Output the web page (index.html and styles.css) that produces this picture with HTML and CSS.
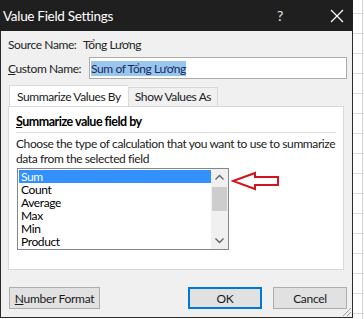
FILE: index.html
```html
<!DOCTYPE html>
<html lang="vi">
<head>
    <meta charset="UTF-8">
    <title>Value Field Settings</title>
    <link rel="stylesheet" href="styles.css">
</head>
<body>
<div class="screen">
    <div class="dialog">
        <div class="titlebar">
            <span class="title">Value Field Settings</span>
            <span class="help">?</span>
            <span class="close">
                <svg width="14" height="14" viewBox="0 0 14 14"><path d="M1 1 L13 13 M13 1 L1 13" stroke="#fff" stroke-width="1.2"/></svg>
            </span>
        </div>

        <div class="content">
            <div class="row">
                <span class="label">Source Name:</span>
                <span>Tổng Lương</span>
            </div>
            <div class="row">
                <span class="label"><u>C</u>ustom Name:</span>
                <div class="text-input"><span class="sel">Sum of Tổng Lương</span></div>
            </div>

            <div class="tabs">
                <div class="tab active">Summarize Values By</div>
                <div class="tab">Show Values As</div>
            </div>
            <div class="panel">
                <div class="heading"><u>S</u>ummarize value field by</div>
                <p class="hint">Choose the type of calculation that you want to use to summarize<br>data from the selected field</p>
                <div class="listbox">
                    <ul class="items">
                        <li class="selected">Sum</li>
                        <li>Count</li>
                        <li>Average</li>
                        <li>Max</li>
                        <li>Min</li>
                        <li>Product</li>
                    </ul>
                    <div class="scrollbar">
                        <svg class="arrow" width="17" height="17" viewBox="0 0 17 17"><path d="M4.5 10.5 L8.5 6.5 L12.5 10.5" fill="none" stroke="#606060" stroke-width="1.3"/></svg>
                        <div class="track"><div class="thumb"></div></div>
                        <svg class="arrow" width="17" height="17" viewBox="0 0 17 17"><path d="M4.5 6.5 L8.5 10.5 L12.5 6.5" fill="none" stroke="#606060" stroke-width="1.3"/></svg>
                    </div>
                </div>
                <!-- red annotation arrow -->
                <svg class="pointer" width="50" height="20" viewBox="0 0 50 20">
                    <path d="M2 10 L24 2 L24 6 L47 6 L47 14 L24 14 L24 18 Z" fill="none" stroke="#d4141c" stroke-width="2"/>
                </svg>
            </div>

            <div class="buttons">
                <button class="btn wide"><u>N</u>umber Format</button>
                <span class="spacer"></span>
                <button class="btn default">OK</button>
                <button class="btn">Cancel</button>
            </div>
        </div>
        <svg class="grip" width="12" height="12" viewBox="0 0 12 12">
            <path d="M11 3 L3 11 M11 7 L7 11" stroke="#a0a0a0" stroke-width="1"/>
        </svg>
    </div>
    <div class="sheet"></div>
</div>
</body>
</html>
```

FILE: styles.css
```css
body {
    margin: 0;
    font-family: Lato, "Liberation Sans", sans-serif;
    font-size: 12px;
    letter-spacing: -0.4px;
    color: #000;
    background: #fff;
}

.screen {
    display: flex;
    width: 364px;
    height: 319px;
    overflow: hidden;
}

.dialog {
    position: relative;
    width: 351px;
    height: 317px;
    background: #f0f0f0;
    border: 1px solid #2b2b2b;
    border-top: none;
    flex-shrink: 0;
}

.titlebar {
    display: flex;
    align-items: center;
    height: 31px;
    margin: 0 -1px;
    padding: 0 0 0 3px;
    background: #1f1f1f;
    color: #fff;
}
.title {
    font-size: 13.5px;
    letter-spacing: -0.3px;
    flex: 1;
}
.help {
    font-size: 14px;
    width: 20px;
    margin-right: 33px;
    color: #e8e8e8;
}
.close {
    display: flex;
    width: 14px;
    margin-right: 9px;
}

.content {
    padding: 5px 5px 0 7px;
}

.row {
    display: flex;
    align-items: center;
    min-height: 16px;
    margin-bottom: 5px;
    color: #222;
    white-space: nowrap;
}
.label {
    width: 75px;
    flex-shrink: 0;
}
.text-input {
    width: 255px;
    height: 20px;
    margin-left: 6px;
    border: 1px solid #ababab;
    background: #fff;
    display: flex;
    align-items: center;
    padding-left: 1px;
}
.sel {
    background: #99c6ee;
    color: #1a2a5c;
    line-height: 15px;
}

.tabs {
    display: flex;
    align-items: flex-end;
    margin: 3px 0 0 1px;
    height: 22px;
    white-space: nowrap;
}
.tab {
    height: 19px;
    line-height: 18px;
    padding: 0 6px;
    border: 1px solid #d9d9d9;
    border-bottom: none;
    background: #f0f0f0;
    box-sizing: border-box;
    color: #1a1a1a;
}
.tab.active {
    height: 22px;
    line-height: 21px;
    padding: 0 7px;
    background: #fff;
    position: relative;
    top: 1px;
    border-right: none;
}

.panel {
    position: relative;
    box-sizing: border-box;
    width: 336px;
    height: 164px;
    border: 1px solid #d9d9d9;
    background: #fff;
    padding: 7px 7px 0 7px;
}
.heading {
    font-weight: bold;
    font-size: 12.5px;
    letter-spacing: -0.5px;
    line-height: 16px;
    padding-bottom: 2px;
    border-bottom: 1px solid #dcdcdc;
}
.hint {
    margin: 3px 0 2px 0;
    line-height: 15px;
    color: #222;
    white-space: nowrap;
}

.listbox {
    display: flex;
    width: 210px;
    height: 80px;
    margin-left: 1px;
    border: 1px solid #828790;
    background: #fff;
    overflow: hidden;
}
.items {
    list-style: none;
    margin: 0;
    padding: 1px 0 0 1px;
    flex: 1;
}
.items li {
    height: 13px;
    line-height: 13px;
    padding-left: 2px;
}
.items li.selected {
    background: #3390ff;
    color: #fff;
}

.scrollbar {
    display: flex;
    flex-direction: column;
    width: 17px;
    background: #f0f0f0;
}
.track {
    flex: 1;
    padding: 1px 1px 0 1px;
}
.thumb {
    height: 24px;
    background: #cdcdcd;
}

.pointer {
    position: absolute;
    left: 222px;
    top: 64px;
}

.buttons {
    display: flex;
    gap: 11px;
    margin: 17px 0 0 1px;
    width: 338px;
}
.spacer {
    flex: 1;
}
.btn {
    box-sizing: border-box;
    height: 22px;
    width: 74px;
    padding: 0;
    font-family: inherit;
    font-size: 12px;
    letter-spacing: -0.3px;
    color: #1a1a1a;
    background: #e1e1e1;
    border: 1px solid #adadad;
    white-space: nowrap;
}
.btn.wide {
    width: 91px;
}
.btn.default {
    border: 2px solid #0078d7;
}

.grip {
    position: absolute;
    right: 0;
    bottom: 0;
}

.sheet {
    flex: 1;
    background-color: #fff;
    background-image:
        linear-gradient(to right, transparent 9px, #d4d4d4 9px, #d4d4d4 10px, transparent 10px),
        repeating-linear-gradient(to bottom, transparent 0, transparent 13px, #dadada 13px, #dadada 14px, transparent 14px, transparent 20px);
}
```
